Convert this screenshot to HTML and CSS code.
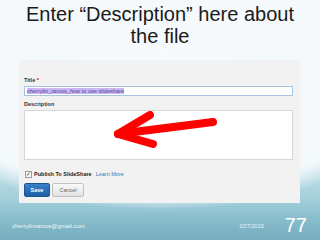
FILE: index.html
```html
<!DOCTYPE html>
<html lang="en">
<head>
    <meta charset="UTF-8">
    <meta name="viewport" content="width=device-width, initial-scale=1.0">
    <title>Enter Description</title>
    <link rel="stylesheet" href="styles.css">
</head>
<body>

    <div class="slide">
        <h1>Enter “Description” here about<br>the file</h1>

        <div class="panel">
            <div class="label">Title <span class="req">*</span></div>
            <div class="title-input"><span class="selected">cherrylin_ramos_how to use slideshare</span></div>

            <div class="label">Description</div>
            <div class="desc-box">
                <svg class="arrow" width="200" height="48" viewBox="0 0 200 48">
                    <g fill="none" stroke="#ff0000" stroke-width="8" stroke-linecap="round" stroke-linejoin="round">
                        <path d="M93 23 L188 11"/>
                        <path d="M125 4 L93 23 L128 33"/>
                    </g>
                </svg>
            </div>

            <div class="publish">
                <span class="check">&#10003;</span>
                <span class="publish-text">Publish To SlideShare</span>
                <span class="learn">Learn More</span>
            </div>

            <div class="buttons">
                <div class="btn save">Save</div>
                <div class="btn cancel">Cancel</div>
            </div>
        </div>

        <div class="footer">
            <span class="email">cherrylinramos@gmail.com</span>
            <span class="date">2/27/2015</span>
            <span class="num">77</span>
        </div>
    </div>

</body>
</html>
```

FILE: styles.css
```css
body {
    margin: 0;
    width: 320px;
    height: 240px;
    overflow: hidden;
    font-family: 'Liberation Sans', Arial, sans-serif;
    background:
        radial-gradient(ellipse 290px 158px at 160px 52px, #f6fafc 0, #f3f8fb 88%, rgba(236, 245, 248, 0) 100%),
        linear-gradient(to bottom, #e4f1f5 0, #b9dbe4 175px, #a2cfdb 200px, #86bccb 220px, #76adbf 240px);
}

.slide {
    display: flex;
    flex-direction: column;
    height: 240px;
}

h1 {
    margin: 0;
    padding-top: 3px;
    font-size: 20px;
    line-height: 22px;
    font-weight: normal;
    text-align: center;
    color: #1a1a1a;
}

.panel {
    margin: 13px 0 0 19px;
    width: 281px;
    height: 143px;
    box-sizing: border-box;
    padding: 17px 7px 0 5px;
    background: #f2f2f2;
    display: flex;
    flex-direction: column;
}

.label {
    font-size: 5.5px;
    font-weight: bold;
    color: #333;
    line-height: 7px;
}

.req {
    color: #d0021b;
}

.title-input {
    margin-top: 2px;
    height: 10px;
    box-sizing: border-box;
    border: 1px solid #a9c3e3;
    background: #fff;
    padding: 1px 2px;
    font-size: 5.6px;
    line-height: 6px;
}

.selected {
    background: #c8b9f1;
    color: #5a3f99;
}

.title-input + .label {
    margin-top: 5px;
}

.desc-box {
    position: relative;
    margin-top: 2px;
    height: 50px;
    box-sizing: border-box;
    border: 1px solid #d6d6d6;
    background: #fff;
}

.arrow {
    position: absolute;
    left: 0;
    top: 0;
}

.publish {
    margin-top: 11px;
    display: flex;
    align-items: center;
    gap: 2px;
    font-size: 5.5px;
    line-height: 7px;
}

.check {
    width: 5px;
    height: 5px;
    border: 1px solid #999;
    background: #fff;
    font-size: 6px;
    line-height: 5px;
    color: #222;
    margin-left: 1px;
}

.publish-text {
    font-weight: bold;
    color: #222;
}

.learn {
    margin-left: 2px;
    color: #2b7bbf;
}

.buttons {
    margin-top: 5px;
    display: flex;
    gap: 2px;
}

.btn {
    height: 14px;
    box-sizing: border-box;
    border-radius: 2px;
    font-size: 5.5px;
    line-height: 12px;
    text-align: center;
}

.save {
    width: 26px;
    background: linear-gradient(#3a80c8, #1f5fa8);
    border: 1px solid #1b5596;
    color: #fff;
    font-weight: bold;
}

.cancel {
    width: 32px;
    background: linear-gradient(#fafafa, #e2e2e2);
    border: 1px solid #c2c2c2;
    color: #666;
}

.footer {
    margin-top: auto;
    height: 37px;
    box-sizing: border-box;
    display: flex;
    align-items: flex-end;
    padding: 0 13px 5px 12px;
    color: #fff;
}

.email {
    font-size: 6px;
    line-height: 6px;
    margin-bottom: 6px;
    color: #eef6f9;
}

.date {
    margin-left: auto;
    margin-bottom: 6px;
    font-size: 5.5px;
    line-height: 6px;
    color: #eef6f9;
}

.num {
    margin-left: 21px;
    font-size: 20px;
    line-height: 20px;
}
```
